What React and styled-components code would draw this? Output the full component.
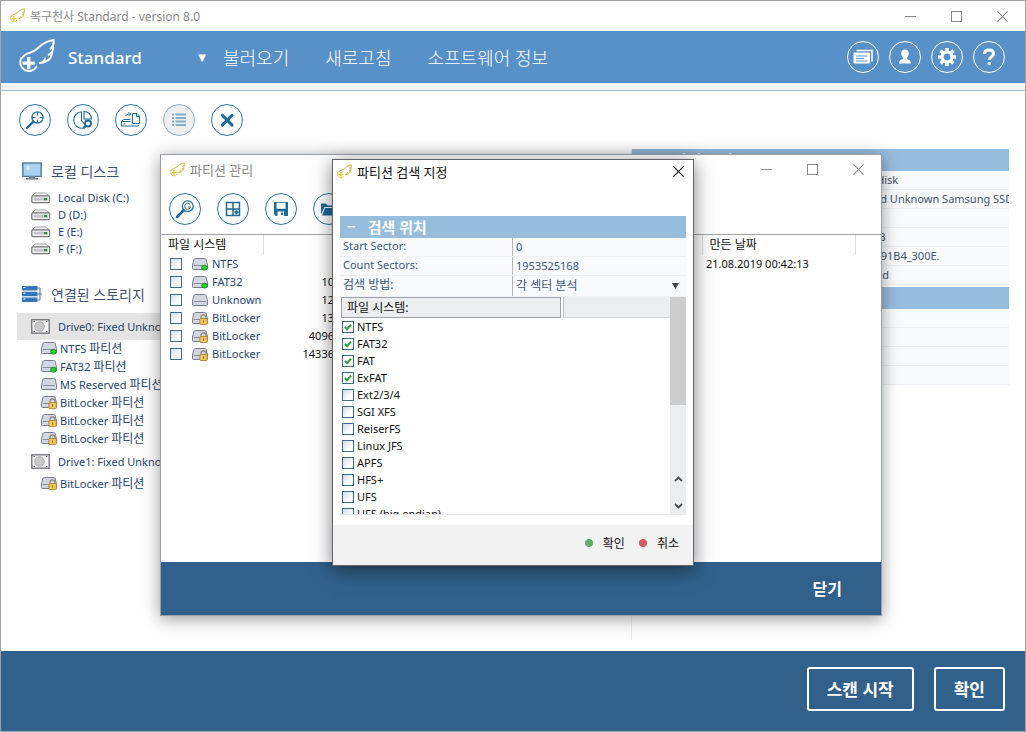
import React from 'react'
import styled, { createGlobalStyle } from 'styled-components'

const localDisks = ['Local Disk (C:)', 'D (D:)', 'E (E:)', 'F (F:)']

const drives = [
  {
    name: 'Drive0: Fixed Unknown Samsung SSD',
    selected: true,
    partitions: [
      { name: 'NTFS', state: 'ok' },
      { name: 'FAT32', state: 'ok' },
      { name: 'MS Reserved' },
      { name: 'BitLocker', state: 'locked' },
      { name: 'BitLocker', state: 'locked' },
      { name: 'BitLocker', state: 'locked' }
    ]
  },
  {
    name: 'Drive1: Fixed Unknown Samsung SSD',
    partitions: [{ name: 'BitLocker', state: 'locked' }]
  }
]

const driveInfo = [
  'Fixed hard disk',
  'Drive0: Fixed Unknown Samsung SSD',
  '',
  '1000.204 GB',
  '0025_3885_91B4_300E.',
  'Unsupported'
]

const foundPartitions = [
  { fs: 'NTFS', state: 'ok', size: '', created: '21.08.2019 00:42:13' },
  { fs: 'FAT32', state: 'ok', size: '10', created: '' },
  { fs: 'Unknown', size: '12', created: '' },
  { fs: 'BitLocker', state: 'locked', size: '13', created: '' },
  { fs: 'BitLocker', state: 'locked', size: '4096', created: '' },
  { fs: 'BitLocker', state: 'locked', size: '14336', created: '' }
]

const fileSystems = [
  ['NTFS', true],
  ['FAT32', true],
  ['FAT', true],
  ['ExFAT', true],
  ['Ext2/3/4', false],
  ['SGI XFS', false],
  ['ReiserFS', false],
  ['Linux JFS', false],
  ['APFS', false],
  ['HFS+', false],
  ['UFS', false],
  ['UFS (big endian)', false]
]

/* icons */

const WingIcon = ({ size = 16, color = '#c9a800', accent = '#e0cc30' }) => (
  <svg width={size} height={size} viewBox="0 0 39 38" fill="none" stroke={color} strokeWidth="2" strokeLinejoin="round" strokeLinecap="round">
    <path d="M4.500 20.500C8 15 13 15.500 18 12.500 24 9 25 3.500 37.500 1.500 38 5 37.500 8 34.500 10.500" />
    <path d="M37.200 9c-.2 4-1.700 6.500-4.700 7.700" />
    <path d="M35.800 15.500c-.8 7-6 9-12.300 9.700 3-.8 5-2.500 5.300-4.900" />
    <path d="M4.500 20A8.900 8.900 0 1 0 20 29" stroke={accent} />
    <path d="M12 19v12.500M5.800 25.300h12.400" stroke={accent} strokeWidth="3.400" strokeLinecap="butt" />
  </svg>
)

const MinimizeIcon = () => (
  <svg width="11" height="11" viewBox="0 0 11 11" stroke="currentColor"><path d="M0 5.500h11" /></svg>
)

const MaximizeIcon = () => (
  <svg width="11" height="11" viewBox="0 0 11 11" stroke="currentColor" fill="none"><rect x=".5" y=".5" width="10" height="10" /></svg>
)

const CloseIcon = () => (
  <svg width="11" height="11" viewBox="0 0 11 11" stroke="currentColor" strokeWidth="1.100"><path d="M.4.4l10.200 10.200M10.600.4L.4 10.600" /></svg>
)

const TargetSearchIcon = () => (
  <svg width="20" height="20" viewBox="0 0 20 20" fill="none" stroke="currentColor">
    <circle cx="12.500" cy="7.500" r="5.600" strokeWidth="1.300" />
    <path d="M8.300 11.700L2 18" strokeWidth="2.400" strokeLinecap="round" />
    <path d="M12.500 2v3.500M12.500 9.500V13M7 7.500h3.500M14.500 7.500H18" />
  </svg>
)

const PieSearchIcon = () => (
  <svg width="20" height="20" viewBox="0 0 20 20" fill="none" stroke="currentColor" strokeWidth="1.100">
    <path d="M8.500 1.700a8.300 8.300 0 1 0 3 16.200M8.500 1.700v8.800l3 3.500" />
    <path d="M11 1.500v7.500h7.500a7.500 7.500 0 0 0-7.500-7.500z" />
    <circle cx="15" cy="13.500" r="3" strokeWidth="1.800" />
    <path d="M12.800 15.800l-2.300 2.300" strokeWidth="2.400" />
  </svg>
)

const DriveToFileIcon = () => (
  <svg width="20" height="20" viewBox="0 0 20 20" fill="none" stroke="currentColor">
    <path d="M11.500 3.500h4.500l2.500 2.500v7.500h-7zM15.500 3.500v3h3" />
    <path d="M.5 11.500l2-2h7M.5 11.500h9M.5 11.500v4.500h17v-1" />
    <path d="M4.500 6c1-1.500 2-2 5-2M7.500 2L9.500 4 7.500 6" />
    <path d="M2.500 14h2" />
  </svg>
)

const ListIcon = () => (
  <svg width="20" height="20" viewBox="0 0 20 20" fill="none" stroke="currentColor" strokeWidth="1.800">
    <path d="M6.500 4.500H17M6.500 8H17M6.500 11.500H17M6.500 15H17M3 4.500h2M3 8h2M3 11.500h2M3 15h2" />
  </svg>
)

const CrossIcon = () => (
  <svg width="20" height="20" viewBox="0 0 20 20" fill="none" stroke="currentColor" strokeWidth="3" strokeLinecap="round">
    <path d="M5.300 5.300l9.800 9.800M15.100 5.300l-9.800 9.800" />
  </svg>
)

const MagnifierIcon = () => (
  <svg width="20" height="20" viewBox="0 0 20 20" fill="none" stroke="currentColor">
    <circle cx="12.800" cy="7.200" r="5.400" strokeWidth="1.200" />
    <path d="M8.500 11.500L2 18" strokeWidth="2.600" strokeLinecap="round" />
    <path d="M15.200 5.600a3 3 0 1 0 .4 2.400h-2.400" />
  </svg>
)

const GridIcon = () => (
  <svg width="20" height="20" viewBox="0 0 20 20" fill="none" stroke="currentColor" strokeWidth="1.500">
    <path d="M3.500 3.500h13v13h-13zM3.500 10h13M10 3.500v13" />
    <path d="M11.500 13.300h4M13.500 11.300v4" strokeWidth="2" />
  </svg>
)

const SaveIcon = () => (
  <svg width="20" height="20" viewBox="0 0 20 20" fill="currentColor">
    <path fillRule="evenodd" d="M3 3h14v14H5l-2-2zM5.500 3.800v6h9v-6zM6.500 12.500V17H13v-4.500z" />
    <path d="M10 13.500h2V16h-2z" />
  </svg>
)

const FolderIcon = () => (
  <svg width="20" height="20" viewBox="0 0 20 20" fill="currentColor">
    <path d="M2 15.500V4.500h5l1.500 2H16V8H5.500z" />
    <path d="M6 9h14l-3 7.500H3z" />
  </svg>
)

const NewsIcon = () => (
  <svg width="22" height="22" viewBox="0 0 22 22">
    <path d="M4.500 4.500h15.500v11" fill="none" stroke="#fff" strokeWidth="1.500" />
    <rect x="1.500" y="6.500" width="16.500" height="11" rx="1" fill="#fff" />
    <path d="M4 10h11.500M4 12.500h8M4 15h11.500" stroke="#5890c8" />
  </svg>
)

const UserIcon = () => (
  <svg width="20" height="20" viewBox="0 0 20 20" fill="#fff">
    <path d="M10 2.500c2.200 0 3.800 1.500 3.800 3.900 0 1.900-.9 3.300-2 4.200v1.300c2.500.5 4.200 1.500 4.200 4.600H4c0-3.100 1.700-4.100 4.200-4.600v-1.300c-1.100-.9-2-2.300-2-4.200 0-2.400 1.600-3.900 3.800-3.900z" />
  </svg>
)

const GearIcon = () => (
  <svg width="20" height="20" viewBox="0 0 20 20">
    <g stroke="#fff" strokeWidth="3.600">
      <path d="M10 1v18M1 10h18M3.600 3.600l12.800 12.800M16.400 3.600L3.600 16.400" />
    </g>
    <circle cx="10" cy="10" r="4.900" fill="#5890c8" stroke="#fff" strokeWidth="3" />
  </svg>
)

const HelpIcon = () => (
  <svg width="20" height="20" viewBox="0 0 20 20" fill="none" stroke="#fff" strokeWidth="3">
    <path d="M5.500 7C5.500 4 7.500 3 10 3s4.500 1.300 4.500 3.700c0 3-4.200 3-4.200 6.300" />
    <circle cx="10.300" cy="16.500" r="1" fill="#fff" strokeWidth="1.600" />
  </svg>
)

const MonitorIcon = () => (
  <svg width="20" height="18" viewBox="0 0 20 18">
    <rect x=".8" y="1" width="18.400" height="13.400" fill="#a9d2f0" stroke="#557a9c" strokeWidth="1.400" />
    <circle cx="6" cy="6" r="2" fill="#d9edfa" />
    <path d="M7 14.500h6V16H7z" fill="#8096a8" />
    <path d="M4 16.800h12" stroke="#6b8296" strokeWidth="1.600" />
  </svg>
)

const StorageIcon = () => (
  <svg width="20" height="18" viewBox="0 0 20 18">
    <path d="M0 1h15.500v4.500H0zM0 6.700h15.500v4.500H0zM0 12.500h15.500V17H0z" fill="#3576b8" />
    <path d="M1.500 2.500h2M1.500 8.200h2M1.500 14h2" stroke="#fff" />
    <path d="M15.500 3H18v12h-2.500M15.500 9H20" stroke="#52708e" fill="none" />
  </svg>
)

const DiskIcon = () => (
  <svg width="20" height="12" viewBox="0 0 20 12">
    <path d="M4 1h11l3.500 3H1z" fill="#f0f0f0" stroke="#909090" strokeWidth=".8" />
    <rect x=".8" y="3.800" width="17.800" height="6.800" rx="1" fill="#f4f4f4" stroke="#77777a" strokeWidth="1.200" />
    <rect x="2.500" y="5.700" width="14.500" height="3" fill="#c2c5cc" />
    <rect x="13" y="6" width="3" height="2.200" fill="#3b8a4c" />
  </svg>
)

const HardDriveIcon = () => (
  <svg width="20" height="15" viewBox="0 0 20 15">
    <rect x=".8" y=".8" width="17.400" height="13.400" fill="#f7f7f7" stroke="#606266" strokeWidth="1.200" />
    <circle cx="8.500" cy="7.500" r="4.800" fill="#c9c9c9" stroke="#a9a9a9" />
    <path d="M2.500 2.500h1.500M15 2.500h1.500M2.500 12.500H4M15 12.500h1.500" stroke="#606266" />
  </svg>
)

const PartitionIcon = ({ state }) => (
  <svg width="16" height="14" viewBox="0 0 16 14">
    <path d="M3.500 1.500h9a2 2 0 0 1 1.700 1.200L15.500 8v3.500a1 1 0 0 1-1 1H1.500a1 1 0 0 1-1-1V8l1.300-5.300a2 2 0 0 1 1.700-1.200z" fill="#d3d7e1" stroke="#777c8a" />
    <path d="M2 8.500h12" stroke="#888d9c" />
    {state === 'ok' && <ellipse cx="12.500" cy="10.700" rx="2.800" ry="2.400" fill="#1fd62c" stroke="#107a1c" strokeWidth=".8" />}
    {state === 'locked' && (
      <g>
        <path d="M9 8V6.300a2.500 2.500 0 0 1 5 0V8" fill="none" stroke="#8b8570" strokeWidth="1.200" />
        <rect x="7.800" y="7.500" width="7.600" height="6" rx="1" fill="#f0c560" stroke="#a97e2a" strokeWidth=".8" />
        <path d="M11.600 9.500v2" stroke="#8a6217" />
      </g>
    )}
  </svg>
)

const Chevron = ({ up }) => (
  <svg width="9" height="6" viewBox="0 0 9 6" fill="none" stroke="#505050" strokeWidth="1.800">
    <path d={up ? 'M1 5l3.500-3.500L8 5' : 'M1 1l3.500 3.500L8 1'} />
  </svg>
)

const PartitionDialog = () => (
  <Dialog>
    <TitleBar $height={23} $gap={5} $dark>
      <WingIcon />
      <h2>파티션 검색 지정</h2>
      <WindowButton $narrow aria-label="닫기"><CloseIcon /></WindowButton>
    </TitleBar>
    <DialogBody>
      <GroupHeader><span>−</span>검색 위치</GroupHeader>
      <Field>
        <label htmlFor="start">Start Sector:</label>
        <input id="start" defaultValue="0" />
      </Field>
      <Field>
        <label htmlFor="count">Count Sectors:</label>
        <input id="count" defaultValue="1953525168" />
      </Field>
      <Field $korean>
        <label htmlFor="method">검색 방법:</label>
        <select id="method"><option>각 섹터 분석</option></select>
        <DropArrow width="7" height="6" viewBox="0 0 7 6"><path d="M0 0h7L3.500 6z" fill="#444" /></DropArrow>
      </Field>
      <ListArea>
        <ListMain>
          <ListHeader>
            <button>파일 시스템:</button>
            <i />
          </ListHeader>
          {fileSystems.map(([name, checked]) => (
            <CheckRow key={name}>
              <Checkbox defaultChecked={checked} />
              {name}
            </CheckRow>
          ))}
        </ListMain>
        <ScrollBar>
          <ScrollThumb />
          <button aria-label="위로"><Chevron up /></button>
          <button aria-label="아래로"><Chevron /></button>
        </ScrollBar>
      </ListArea>
    </DialogBody>
    <DialogFooter>
      <button><Dot $color="#5fae6b" />확인</button>
      <button><Dot $color="#cf5c60" />취소</button>
    </DialogFooter>
  </Dialog>
)

const PartitionManager = () => (
  <ManagerWindow>
    <TitleBar $height={29} $gap={5} $left={8}>
      <WingIcon />
      <h2>파티션 관리</h2>
      <WindowButton aria-label="최소화"><MinimizeIcon /></WindowButton>
      <WindowButton aria-label="최대화"><MaximizeIcon /></WindowButton>
      <WindowButton aria-label="닫기"><CloseIcon /></WindowButton>
    </TitleBar>
    <Toolbar $compact>
      <RoundButton aria-label="검색"><MagnifierIcon /></RoundButton>
      <RoundButton aria-label="격자"><GridIcon /></RoundButton>
      <RoundButton aria-label="저장"><SaveIcon /></RoundButton>
      <RoundButton aria-label="열기"><FolderIcon /></RoundButton>
    </Toolbar>
    <TableArea>
      <PartitionTable>
        <colgroup>
          <col width="102" />
          <col width="74" />
          <col />
          <col width="153" />
          <col width="26" />
        </colgroup>
        <thead>
          <tr><th>파일 시스템</th><th /><th /><th>만든 날짜</th><th /></tr>
        </thead>
        <tbody>
          {foundPartitions.map((item, index) => (
            <tr key={index}>
              <td>
                <PartitionLabel>
                  <Checkbox />
                  <PartitionIcon state={item.state} />
                  {item.fs}
                </PartitionLabel>
              </td>
              <td className="size">{item.size}</td>
              <td />
              <td className="date">{item.created}</td>
              <td />
            </tr>
          ))}
        </tbody>
      </PartitionTable>
    </TableArea>
    <ManagerFooter><button>닫기</button></ManagerFooter>
  </ManagerWindow>
)

const App = () => (
  <AppWindow>
    <GlobalStyle />
    <TitleBar $height={30} $gap={5} $left={8}>
      <WingIcon />
      <h1>복구천사 Standard - version 8.0</h1>
      <WindowButton aria-label="최소화"><MinimizeIcon /></WindowButton>
      <WindowButton aria-label="최대화"><MaximizeIcon /></WindowButton>
      <WindowButton aria-label="닫기"><CloseIcon /></WindowButton>
    </TitleBar>
    <Header>
      <WingIcon size={38} color="#fff" accent="#fff" />
      <Brand>Standard <span>▼</span></Brand>
      <Menu>
        <a href="#load">불러오기</a>
        <a href="#refresh">새로고침</a>
        <a href="#about">소프트웨어 정보</a>
      </Menu>
      <HeaderButton aria-label="소식"><NewsIcon /></HeaderButton>
      <HeaderButton aria-label="사용자"><UserIcon /></HeaderButton>
      <HeaderButton aria-label="설정"><GearIcon /></HeaderButton>
      <HeaderButton aria-label="도움말"><HelpIcon /></HeaderButton>
    </Header>
    <Strip />
    <Toolbar>
      <RoundButton aria-label="검색"><TargetSearchIcon /></RoundButton>
      <RoundButton aria-label="파티션"><PieSearchIcon /></RoundButton>
      <RoundButton aria-label="이미지"><DriveToFileIcon /></RoundButton>
      <RoundButton aria-label="목록" disabled><ListIcon /></RoundButton>
      <RoundButton aria-label="닫기"><CrossIcon /></RoundButton>
    </Toolbar>
    <Content>
      <Sidebar>
        <SectionTitle><MonitorIcon />로컬 디스크</SectionTitle>
        <DiskList>
          {localDisks.map(name => <li key={name}><DiskIcon />{name}</li>)}
        </DiskList>
        <SectionTitle><StorageIcon />연결된 스토리지</SectionTitle>
        <DriveTree>
          {drives.map(drive => (
            <li key={drive.name}>
              <DriveRow $selected={drive.selected}><HardDriveIcon />{drive.name}</DriveRow>
              {drive.partitions.map((item, index) => (
                <PartitionRow key={index}>
                  <PartitionIcon state={item.state} />
                  {item.name} <span>파티션</span>
                </PartitionRow>
              ))}
            </li>
          ))}
        </DriveTree>
      </Sidebar>
      <InfoPanel>
        <GroupHeader><span>−</span>드라이브 정보</GroupHeader>
        <InfoRows>
          {driveInfo.map((value, index) => <InfoRow key={index}>{value}</InfoRow>)}
        </InfoRows>
        <GroupHeader />
        <InfoRow />
        <InfoRow />
        <InfoRow />
        <InfoRow />
      </InfoPanel>
    </Content>
    <Footer>
      <button>스캔 시작</button>
      <button>확인</button>
    </Footer>
    <PartitionManager />
    <PartitionDialog />
  </AppWindow>
)

export default App

const GlobalStyle = createGlobalStyle`
  * {
    box-sizing: border-box;
  }

  body {
    margin: 0;
    font-family: 'Noto Sans', 'Noto Sans CJK KR', sans-serif;
    font-size: 11px;
    color: #27456b;
    background: #fff;
  }

  button, input, select {
    font: inherit;
    color: inherit;
    background: none;
    border: 0;
    border-radius: 0;
    margin: 0;
    padding: 0;
  }

  h1, h2, h3, ul {
    margin: 0;
    padding: 0;
    list-style: none;
    font-weight: 400;
  }

  svg {
    display: block;
    flex: none;
  }
`

const AppWindow = styled.div`
  position: relative;
  display: flex;
  flex-direction: column;
  min-height: 100vh;
  border: 1px solid #a3a3a3;
  overflow: hidden;
`

const TitleBar = styled.div`
  display: flex;
  align-items: center;
  flex: none;
  gap: ${props => props.$gap}px;
  height: ${props => props.$height}px;
  padding-left: ${props => props.$left || 3}px;
  color: ${props => (props.$dark ? '#111' : '#8a8a8a')};

  h1, h2 {
    flex: 1;
    font-size: 12px;
    white-space: nowrap;
  }

  h2 {
    font-size: 13px;
  }
`

const WindowButton = styled.button`
  display: flex;
  align-items: center;
  justify-content: center;
  align-self: stretch;
  width: ${props => (props.$narrow ? 30 : 46)}px;

  & + & {
    margin-left: -5px;
  }
`

const Header = styled.header`
  display: flex;
  align-items: center;
  flex: none;
  gap: 10px;
  height: 52px;
  padding: 0 20px 0 16px;
  color: #fff;
  background: #5890c8;
`

const Brand = styled.button`
  display: flex;
  align-items: center;
  justify-content: space-between;
  width: 138px;
  margin-left: 3px;
  font-size: 17px;
  font-weight: 500;

  span {
    font-family: 'DejaVu Sans', sans-serif;
    font-size: 10px;
  }
`

const Menu = styled.nav`
  display: flex;
  flex: 1;
  gap: 36px;
  margin-left: 7px;

  a {
    color: #fff;
    font-size: 18px;
    font-weight: 300;
    text-decoration: none;
    white-space: nowrap;
  }
`

const HeaderButton = styled.button`
  display: flex;
  align-items: center;
  justify-content: center;
  flex: none;
  width: 32px;
  height: 32px;
  border: 1px solid #fff;
  border-radius: 50%;
`

const Strip = styled.div`
  flex: none;
  height: 8px;
  background: #f3f3f3;
  border-bottom: 1px solid #a8bdcc;
`

const Toolbar = styled.div`
  display: flex;
  flex: none;
  gap: 16px;
  padding: ${props => (props.$compact ? '9px 8px' : '13px 18px')};
`

const RoundButton = styled.button`
  display: flex;
  align-items: center;
  justify-content: center;
  flex: none;
  width: 32px;
  height: 32px;
  color: #1f6a98;
  border: 1px solid #2f76a3;
  border-radius: 50%;

  &:disabled {
    color: #86adc8;
    border-color: #8fb0c6;
    background: #efefef;
  }
`

const Content = styled.main`
  display: grid;
  grid-template-columns: 16fr 10fr;
  flex: 1;
  margin-bottom: 11px;
`

const Sidebar = styled.aside`
  padding: 11px 0 0 16px;
`

const SectionTitle = styled.h3`
  display: flex;
  align-items: center;
  gap: 9px;
  height: 22px;
  padding-left: 5px;
  font-size: 14px;
  color: #40536f;
`

const DiskList = styled.ul`
  margin: 7px 0 26px;

  li {
    display: flex;
    align-items: center;
    gap: 7px;
    height: 17px;
    padding-left: 14px;
  }
`

const DriveTree = styled.ul`
  margin-top: 8px;
`

const DriveRow = styled.div`
  display: flex;
  align-items: center;
  gap: 7px;
  height: 27px;
  padding: 0 0 1px 14px;
  background: ${props => (props.$selected ? '#e4e4e4' : 'none')};
`

const PartitionRow = styled.div`
  display: flex;
  align-items: center;
  gap: 3px;
  height: 18px;
  padding: 0 0 2px 24px;

  span {
    font-size: 12px;
  }
`

const InfoPanel = styled.section`
  padding-right: 16px;
  border-left: 1px solid #ececec;
`

const GroupHeader = styled.h3`
  display: flex;
  align-items: center;
  gap: 12px;
  height: 22px;
  padding: 0 0 2px 7px;
  font-size: 15px;
  font-weight: 600;
  color: #fff;
  background: #97bddd;
`

const InfoRows = styled.div`
  padding-bottom: 2px;
`

const InfoRow = styled.div`
  height: 19px;
  padding-left: 50%;
  line-height: 18px;
  white-space: nowrap;
  overflow: hidden;
  color: #40536f;
  background: #f9fafc;
  border-bottom: 1px solid #ebeef2;
`

const Footer = styled.footer`
  display: flex;
  align-items: flex-start;
  justify-content: flex-end;
  flex: none;
  gap: 20px;
  height: 80px;
  padding: 16px 20px;
  background: #31618a;

  button {
    height: 44px;
    padding: 0 18px 2px;
    font-size: 17px;
    font-weight: 600;
    color: #fff;
    border: 2px solid #fff;
    border-radius: 3px;
  }
`

/* floating windows */

const ManagerWindow = styled.section`
  position: absolute;
  left: 159px;
  top: 153px;
  display: flex;
  flex-direction: column;
  width: 722px;
  height: 462px;
  background: #fff;
  border: 1px solid #98a0a8;
  box-shadow: 0 3px 16px rgba(0, 0, 0, 0.4);
`

const TableArea = styled.div`
  flex: 1;
  border-top: 1px solid #a0a4a8;
`

const PartitionTable = styled.table`
  width: 100%;
  table-layout: fixed;
  border-collapse: collapse;

  th {
    height: 20px;
    padding: 0 7px;
    text-align: left;
    font-size: 12px;
    font-weight: 400;
    line-height: 18px;
    color: #111;
    white-space: nowrap;
    border-right: 1px solid #e0e0e0;
  }

  th:nth-child(2), th:last-child {
    border-right: 0;
  }

  td {
    height: 18px;
    padding: 0;
    line-height: 18px;
    white-space: nowrap;
  }

  td.size {
    padding-right: 3px;
    text-align: right;
    color: #111;
  }

  td.date {
    padding-left: 4px;
    color: #111;
  }
`

const PartitionLabel = styled.label`
  display: flex;
  align-items: center;
  gap: 4px;
  padding-left: 9px;

  input {
    margin-right: 6px;
  }
`

const Checkbox = styled.input.attrs({ type: 'checkbox' })`
  appearance: none;
  display: flex;
  justify-content: center;
  flex: none;
  width: 12px;
  height: 12px;
  border: 1px solid #3f6b92;
  background: linear-gradient(135deg, #d3dbe3, #fff 70%);

  &:checked {
    background: #fff;
  }

  &:checked::after {
    content: '';
    width: 2px;
    height: 5px;
    margin-top: 1px;
    border: solid #35a03c;
    border-width: 0 2px 2px 0;
    box-sizing: content-box;
    transform: rotate(42deg);
  }
`

const ManagerFooter = styled.div`
  display: flex;
  align-items: center;
  justify-content: flex-end;
  flex: none;
  height: 53px;
  padding: 0 39px 2px 0;
  background: #31618a;

  button {
    font-size: 16px;
    font-weight: 600;
    color: #fff;
  }
`

const Dialog = styled.section`
  position: absolute;
  left: 331px;
  top: 158px;
  display: flex;
  flex-direction: column;
  width: 362px;
  height: 407px;
  background: #fff;
  border: 1px solid #606468;
  box-shadow: 0 4px 18px rgba(0, 0, 0, 0.5);
`

const DialogBody = styled.div`
  display: flex;
  flex-direction: column;
  flex: 1;
  min-height: 0;
  padding: 33px 7px 10px 7px;

  ${GroupHeader} {
    flex: none;
  }
`

const Field = styled.div`
  position: relative;
  display: grid;
  grid-template-columns: 172px 1fr;
  align-items: center;
  flex: none;
  height: ${props => (props.$korean ? 21 : 19)}px;
  font-size: ${props => (props.$korean ? 12 : 11)}px;
  line-height: 16px;
  color: #40597c;
  background: #f9fafc;
  border-bottom: 1px solid #eef0f4;

  label {
    padding: 0 0 2px 3px;
  }

  input, select {
    appearance: none;
    width: 100%;
    height: 100%;
    padding: 0 0 1px 3px;
    border-left: 1px solid #b4b8bc;
  }
`

const DropArrow = styled.svg`
  position: absolute;
  right: 7px;
  top: 7px;
  pointer-events: none;
`

const ListArea = styled.div`
  display: flex;
  flex: 1;
  min-height: 0;
  border-bottom: 1px solid #e8e8e8;
`

const ListMain = styled.div`
  flex: 1;
  overflow: hidden;
`

const ListHeader = styled.div`
  display: flex;
  gap: 2px;
  height: 21px;
  margin-left: 1px;

  button {
    flex: 2;
    padding-left: 5px;
    text-align: left;
    font-size: 12px;
    line-height: 18px;
    color: #111;
    background: #ecedef;
    border: 1px solid #9ca2a8;
  }

  i {
    flex: 1;
    background: #ecedef;
    border-left: 1px solid #b8bcc0;
    border-bottom: 1px solid #d4d6d9;
  }
`

const CheckRow = styled.label`
  display: flex;
  align-items: center;
  gap: 3px;
  height: 17px;
  padding-left: 2px;
  color: #111;
`

const ScrollBar = styled.div`
  display: flex;
  flex-direction: column;
  flex: none;
  width: 16px;
  background: #ecedef;

  button {
    display: flex;
    align-items: center;
    justify-content: center;
    height: 27px;
    padding-top: 10px;
  }
`

const ScrollThumb = styled.div`
  height: 108px;
  margin-bottom: auto;
  background: #cdcdcd;
`

const DialogFooter = styled.div`
  display: flex;
  align-items: center;
  justify-content: flex-end;
  flex: none;
  gap: 14px;
  height: 40px;
  padding: 0 14px 4px 0;
  background: #f2f2f2;

  button {
    display: flex;
    align-items: center;
    gap: 10px;
    font-size: 12px;
    color: #111;
  }
`

const Dot = styled.span`
  width: 8px;
  height: 8px;
  border-radius: 50%;
  background: ${props => props.$color};
`
